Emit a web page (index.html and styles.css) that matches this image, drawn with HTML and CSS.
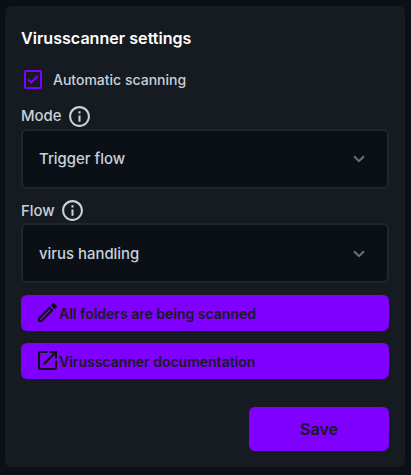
FILE: index.html
```html
<!DOCTYPE html>
<html lang="en">
<head>
<meta charset="utf-8">
<title>Virusscanner settings</title>
<link rel="stylesheet" href="styles.css">
</head>
<body>
<main class="card">
  <h1 class="title">Virusscanner settings</h1>
  <div class="check-row">
    <svg class="checkbox" viewBox="0 0 20 20"><rect x="2" y="2" width="16" height="17" rx="1"/><path d="M5.2 10.500l3 3L14.500 7.200"/></svg>
    <span>Automatic scanning</span>
  </div>
  <div class="label">
    <span>Mode</span>
    <svg class="info" viewBox="0 0 24 24"><path d="M11 7h2v2h-2zm0 4h2v6h-2zm1-9C6.48 2 2 6.48 2 12s4.480 10 10 10 10-4.480 10-10S17.520 2 12 2zm0 18c-4.410 0-8-3.590-8-8s3.590-8 8-8 8 3.590 8 8-3.590 8-8 8z"/></svg>
  </div>
  <div class="select">
    <span>Trigger flow</span>
    <svg class="chevron" viewBox="0 0 12 8"><path d="M1 1.200l5 5 5-5"/></svg>
  </div>
  <div class="label label-flow">
    <span>Flow</span>
    <svg class="info" viewBox="0 0 24 24"><path d="M11 7h2v2h-2zm0 4h2v6h-2zm1-9C6.48 2 2 6.48 2 12s4.480 10 10 10 10-4.480 10-10S17.520 2 12 2zm0 18c-4.410 0-8-3.590-8-8s3.590-8 8-8 8 3.590 8 8-3.590 8-8 8z"/></svg>
  </div>
  <div class="select">
    <span>virus handling</span>
    <svg class="chevron" viewBox="0 0 12 8"><path d="M1 1.200l5 5 5-5"/></svg>
  </div>
  <button class="button">
    <svg class="icon" viewBox="3 3 18 18"><path d="M14.060 9.020l.92.92L5.920 19H5v-.92l9.060-9.060M17.660 3c-.25 0-.51.1-.7.290l-1.830 1.830 3.750 3.750 1.830-1.830c.39-.39.39-1.020 0-1.410l-2.340-2.340c-.2-.2-.45-.29-.71-.29zm-3.600 3.190L3 17.250V21h3.750L17.810 9.940l-3.750-3.750z"/></svg>
    <span>All folders are being scanned</span>
  </button>
  <button class="button">
    <svg class="icon" viewBox="3 3 18 18"><path d="M19 19H5V5h7V3H5c-1.110 0-2 .9-2 2v14c0 1.100.89 2 2 2h14c1.100 0 2-.9 2-2v-7h-2v7zM14 3v2h3.590l-9.830 9.830 1.410 1.410L19 6.410V10h2V3h-7z"/></svg>
    <span>Virusscanner documentation</span>
  </button>
  <button class="save">Save</button>
</main>
</body>
</html>
```
FILE: styles.css
```css
* {
  box-sizing: border-box;
}

body {
  margin: 0;
  padding: 6px 6px 8px 5px;
  height: 475px;
  background: #0b1017;
  color: #c9d1d9;
  font-family: Inter, sans-serif;
  font-size: 14.9px;
  font-weight: 500;
}

.card {
  display: flex;
  flex-direction: column;
  height: 461px;
  padding: 20px 16px 16px;
  border-radius: 6px;
  background: #161b22;
}

.title {
  margin: 0 0 17px;
  color: #fff;
  font-size: 16.1px;
  font-weight: 600;
  line-height: 24px;
}

.check-row {
  display: flex;
  align-items: center;
  gap: 10px;
  height: 24px;
  padding-left: 2px;
  font-size: 14px;
}

.checkbox {
  width: 20px;
  height: 20px;
  fill: none;
  stroke: #8000ff;
  stroke-width: 2;
}

.label {
  display: flex;
  align-items: center;
  gap: 5px;
  height: 24px;
  margin: 13px 0 1px;
}

.label-flow {
  margin: 10px 0 0;
}

.info {
  width: 25px;
  height: 25px;
  fill: #c9d1d9;
}

.label-flow .info {
  margin-bottom: 2px;
}

.select {
  display: flex;
  align-items: center;
  justify-content: space-between;
  height: 60px;
  padding: 0 22px 0 16px;
  border: 2px solid #21262d;
  border-radius: 6px;
  background: #0b1017;
}

.label-flow + .select {
  padding-top: 1px;
}

.chevron {
  width: 12px;
  height: 8px;
  fill: none;
  stroke: #6e7079;
  stroke-width: 2;
}

.button,
.save {
  border: 0;
  border-radius: 6px;
  background: #8000ff;
  color: #161b22;
  font-family: inherit;
  font-weight: 600;
}

.button {
  display: flex;
  align-items: center;
  gap: 2px;
  height: 36px;
  margin: 12px 0 0;
  padding: 0 16px 0 17px;
  font-size: 14px;
}

.icon {
  width: 19px;
  height: 19px;
  margin-bottom: 2px;
  fill: #0d1117;
}

.save {
  align-self: flex-end;
  width: 140px;
  height: 44px;
  margin: 28px 0 0;
  padding: 0;
  font-size: 16px;
}
```
